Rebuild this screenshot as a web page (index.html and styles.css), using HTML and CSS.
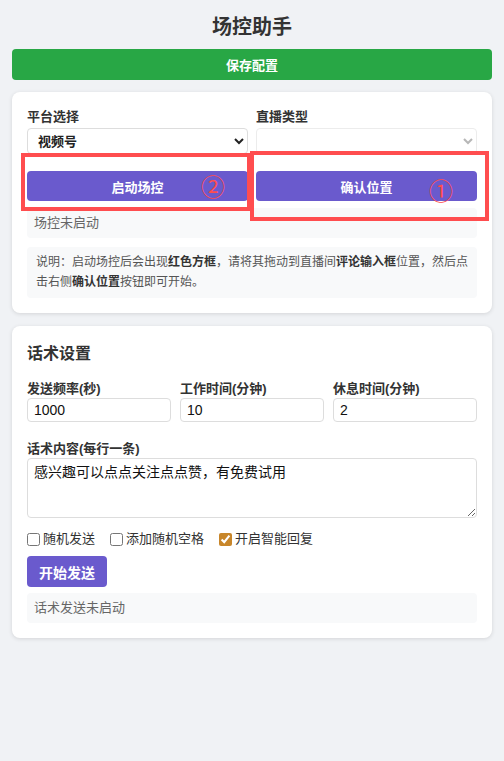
FILE: index.html
```html
<!DOCTYPE html>
<html lang="zh">
<head>
<meta charset="utf-8">
<title>场控助手</title>
<link rel="stylesheet" href="styles.css">
</head>
<body>
<div class="page">
  <h1 class="title">场控助手</h1>
  <button class="btn btn-save">保存配置</button>

  <section class="card card-control">
    <div class="two-col">
      <div class="col">
        <label class="field-label">平台选择</label>
        <select class="select">
          <option>视频号</option>
        </select>
        <button class="btn btn-purple btn-wide">启动场控</button>
      </div>
      <div class="col">
        <label class="field-label">直播类型</label>
        <select class="select select-empty" disabled>
          <option></option>
        </select>
        <button class="btn btn-purple btn-wide">确认位置</button>
      </div>
    </div>
    <div class="status">场控未启动</div>
    <div class="note">说明：启动场控后会出现<b>红色方框</b>，请将其拖动到直播间<b>评论输入框</b>位置，然后点击右侧<b>确认位置</b>按钮即可开始。</div>

    <div class="mark mark-left"></div>
    <div class="mark mark-right"></div>
    <span class="num num-2">②</span>
    <span class="num num-1">①</span>
  </section>

  <section class="card card-speech">
    <h2 class="card-title">话术设置</h2>
    <div class="three-col">
      <div class="col">
        <label class="field-label field-label-tight">发送频率(秒)</label>
        <input class="input" type="text" value="1000">
      </div>
      <div class="col">
        <label class="field-label field-label-tight">工作时间(分钟)</label>
        <input class="input" type="text" value="10">
      </div>
      <div class="col">
        <label class="field-label field-label-tight">休息时间(分钟)</label>
        <input class="input" type="text" value="2">
      </div>
    </div>
    <label class="field-label field-label-gap">话术内容(每行一条)</label>
    <textarea class="textarea">感兴趣可以点点关注点点赞，有免费试用</textarea>
    <div class="checks">
      <label class="check"><input type="checkbox"> 随机发送</label>
      <label class="check"><input type="checkbox"> 添加随机空格</label>
      <label class="check"><input type="checkbox" checked> 开启智能回复</label>
    </div>
    <button class="btn btn-purple btn-start">开始发送</button>
    <div class="status status-speech">话术发送未启动</div>
  </section>
</div>
</body>
</html>
```

FILE: styles.css
```css
* { box-sizing: border-box; }
html, body { margin: 0; padding: 0; }
body {
  background: #f0f2f5;
  font-family: "Liberation Sans", "Noto Sans CJK SC", sans-serif;
  color: #333;
}
.page {
  padding: 12px 12px 20px;
  display: flex;
  flex-direction: column;
}
.title {
  margin: 0 0 7px;
  font-size: 20px;
  line-height: 30px;
  text-align: center;
  font-weight: 700;
  color: #333;
}
.btn {
  border: none;
  border-radius: 4px;
  color: #fff;
  font-family: "Liberation Sans", "Noto Sans CJK SC", sans-serif;
  font-weight: 700;
  cursor: pointer;
}
.btn-save {
  width: 100%;
  height: 31px;
  background: #28a745;
  font-size: 13px;
}
.btn-purple { background: #6a5acd; }
.btn-wide {
  width: 100%;
  height: 30px;
  margin-top: 17px;
  font-size: 13px;
}
.card {
  background: #fff;
  border-radius: 8px;
  box-shadow: 0 1px 4px rgba(0, 0, 0, 0.12);
  padding: 15px 15px 15px;
  margin-top: 12px;
  position: relative;
}
.card-speech { margin-top: 13px; }
.two-col {
  display: grid;
  grid-template-columns: 1fr 1fr;
  gap: 8px;
}
.three-col {
  display: grid;
  grid-template-columns: repeat(3, minmax(0, 1fr));
  gap: 9px;
}
.col { display: flex; flex-direction: column; min-width: 0; }
.field-label {
  font-size: 13px;
  font-weight: 700;
  line-height: 19px;
  margin-bottom: 2px;
  color: #333;
}
.field-label-tight { margin-bottom: 0; }
.select {
  height: 26px;
  border: 1px solid #ddd;
  border-radius: 4px;
  background: #fff;
  font-family: "Liberation Sans", "Noto Sans CJK SC", sans-serif;
  font-size: 13px;
  font-weight: 700;
  color: #222;
  padding: 0 6px;
}
.select-empty { color: #999; border-color: #e4e4e4; }
.status {
  margin-top: 7px;
  height: 30px;
  background: #f8f9fa;
  border-radius: 4px;
  padding: 0 7px;
  font-size: 13px;
  line-height: 30px;
  color: #666;
}
.note {
  margin-top: 9px;
  background: #f8f9fa;
  border-radius: 4px;
  padding: 6px 7px 6px 9px;
  font-size: 12px;
  line-height: 19.5px;
  color: #555;
}
.note b { color: #333; font-weight: 700; }

.mark {
  position: absolute;
  border: 4px solid #ff4d4f;
  pointer-events: none;
}
.mark-left { left: 9px; top: 61px; width: 230px; height: 58px; }
.mark-right { left: 238px; top: 59px; width: 239px; height: 70px; }
.num {
  position: absolute;
  color: #ff4d4f;
  font-family: "Noto Sans CJK SC", sans-serif;
  font-weight: 400;
  font-size: 24px;
  line-height: 24px;
}
.num-2 { left: 189px; top: 82px; }
.num-1 { left: 417px; top: 86px; }

.card-title {
  margin: 0 0 12px;
  font-size: 16px;
  line-height: 26px;
  font-weight: 700;
  color: #333;
}
.input {
  width: 100%;
  min-width: 0;
  height: 24px;
  border: 1px solid #ddd;
  border-radius: 4px;
  padding: 0 6px;
  font-family: "Liberation Sans", "Noto Sans CJK SC", sans-serif;
  font-size: 14px;
  color: #111;
}
.field-label-gap { margin-top: 17px; display: block; margin-bottom: 0; }
.textarea {
  display: block;
  width: 100%;
  height: 60px;
  margin: 0;
  border: 1px solid #ddd;
  border-radius: 4px;
  padding: 2px 6px;
  font-family: "Noto Sans CJK SC", sans-serif;
  font-size: 14px;
  letter-spacing: 0;
  line-height: 20px;
  color: #111;
  resize: vertical;
}
.checks {
  display: flex;
  gap: 15px;
  margin-top: 12px;
  font-size: 13px;
  line-height: 18px;
  color: #333;
}
.check { display: flex; align-items: center; gap: 3px; }
.check input {
  width: 13px;
  height: 13px;
  margin: 0;
  accent-color: #c8862a;
}
.btn-start {
  align-self: flex-start;
  margin-top: 8px;
  height: 31px;
  padding: 0 12px;
  font-size: 14px;
}
.card-speech { display: flex; flex-direction: column; }
.status-speech { margin-top: 6px; }
```
